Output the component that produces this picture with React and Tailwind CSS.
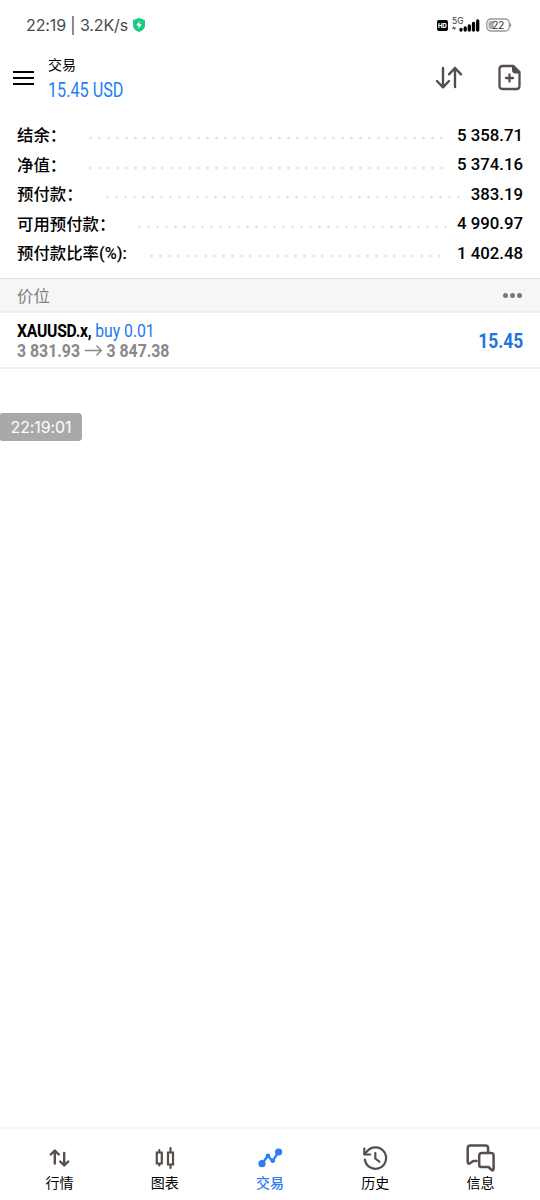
import React from 'react';

const summary = [
  { label: '结余：', value: '5 358.71' },
  { label: '净值：', value: '5 374.16' },
  { label: '预付款：', value: '383.19' },
  { label: '可用预付款：', value: '4 990.97' },
  { label: '预付款比率(%):', value: '1 402.48' },
];

const tabs = [
  { name: '行情', icon: QuotesIcon },
  { name: '图表', icon: ChartIcon },
  { name: '交易', icon: TradeIcon, active: true },
  { name: '历史', icon: HistoryIcon },
  { name: '信息', icon: MessagesIcon },
];

const strokeProps = {
  fill: 'none',
  stroke: 'currentColor',
  strokeWidth: 2.2,
  strokeLinecap: 'round',
  strokeLinejoin: 'round',
};

function QuotesIcon() {
  return (
    <svg width="30" height="30" {...strokeProps} strokeWidth="2.4">
      <path d="M9.800 20.500V8M5.800 11.500l4-4 4 4M19.200 10v12M15.200 18.500l4 4 4-4" />
    </svg>
  );
}

function ChartIcon() {
  return (
    <svg width="30" height="30" {...strokeProps} strokeWidth="2.2">
      <path d="M9.300 7V9.500M9.300 20.500v2M6.800 9.500h5v11h-5zM20.500 5v4M20.500 21.500v3.500M18 9.500h5v12h-5z" strokeLinejoin="miter" />
    </svg>
  );
}

function TradeIcon() {
  return (
    <svg width="30" height="30" {...strokeProps} strokeWidth="2.4">
      <path d="M7 20.700l6-8 4.500 5.500 6-9" />
      <circle cx="7" cy="20.700" r="3.600" fill="currentColor" stroke="none" />
      <circle cx="13" cy="12.700" r="2.300" fill="currentColor" stroke="none" />
      <circle cx="17.800" cy="17.800" r="2.300" fill="currentColor" stroke="none" />
      <circle cx="23.600" cy="9" r="3.600" fill="currentColor" stroke="none" />
    </svg>
  );
}

function HistoryIcon() {
  return (
    <svg width="30" height="30" {...strokeProps}>
      <path d="M4.800 16.500a10.700 10.700 0 1 0 2.300-8.200L4.600 11" />
      <path d="M4.300 5.500v6h6M15.300 10v5.500l4 3.200" />
    </svg>
  );
}

function MessagesIcon() {
  return (
    <svg width="30" height="30" {...strokeProps} strokeWidth="2.5">
      <path d="M11.500 18H8.200L5 20.300Q2.700 21.400 2.700 19V5.300q0-2.700 2.700-2.700h15q2.700 0 2.700 2.700V9" />
      <path d="M17 10h9q2.600 0 2.600 2.600V25.800q0 2.400-2 1.200L23.500 24H16.500q-2.300 0-2.300-2.300v-9q0-2.700 2.700-2.700z" />
    </svg>
  );
}

function StatusBar() {
  return (
    <div className="flex h-[50px] items-center pl-[26px] pr-[28px] text-[#4a4a4a]">
      <span className="w-[107px] whitespace-pre font-['Inter',sans-serif] text-[16px] tracking-[-0.12px]">22:19 | 3.2K/s</span>
      <svg width="12" height="14" viewBox="0 0 12 14">
        <path d="M6 0l6 2v5.500q0 4-6 6.500Q0 11.500 0 7.500V2z" fill="#19cc85" />
        <path d="M6.600 3L3.300 7.600h2.300L5.200 11l3.500-4.800H6.300z" fill="#fff" />
      </svg>
      <div className="ml-auto flex items-center">
        <span className="flex h-[11px] w-[11px] items-center justify-center rounded-[2px] bg-black font-['Inter',sans-serif] text-[6px] font-extrabold text-white">HD</span>
        <svg className="ml-[4px]" width="29" height="18">
          <text x="0" y="7.500" fontFamily="Inter, sans-serif" fontSize="8.500" fill="#333">5G</text>
          <path d="M0 12.500l1.700-2.500v3zM4 11.500l-1.700 3v-3z" fill="#222" />
          <g stroke="#000" strokeWidth="3.300" strokeLinecap="round">
            <path d="M9 14v-.5M13.200 14v-2M17.300 14v-4M21.500 14v-6.500M25.700 14v-9" />
          </g>
        </svg>
        <svg className="ml-[5px]" width="26" height="14">
          <rect x=".8" y="1" width="22.500" height="12" rx="4" fill="none" stroke="#999" strokeWidth="1.300" />
          <path d="M5 3h2.500v8H5q-2.500 0-2.500-2.500v-3Q2.500 3 5 3z" fill="#aaa" />
          <path d="M24.300 5.500q1.500 1.500 0 3z" stroke="#999" fill="#999" />
          <text x="6" y="10.800" fontFamily="Inter, sans-serif" fontSize="10.500" letterSpacing="-.5" fill="#333">22</text>
        </svg>
      </div>
    </div>
  );
}

function Header() {
  return (
    <header className="flex h-[58px] items-center pl-[13px] pr-[17px]">
      <div className="mt-[-2px] flex w-[21px] flex-col gap-[4px]">
        <span className="h-[2px] bg-black" />
        <span className="h-[2px] bg-black" />
        <span className="h-[2px] bg-black" />
      </div>
      <div className="mt-[-4px] ml-[14px] flex flex-col">
        <h1 className="h-[25px] text-[14px] leading-[24px]">交易</h1>
        <span className="origin-left scale-x-[0.81] whitespace-nowrap text-[20px] leading-[24px] text-[#2081f7]">15.45 USD</span>
      </div>
      <svg className="mt-[-2px] ml-auto text-[#564e4b]" width="28" height="28" {...strokeProps} strokeWidth="2.400">
        <path d="M8 4v19M2 17l6 6.300 6-6.300M20 23V4M14 10.300L20 4l6 6.300" />
      </svg>
      <svg className="mt-[-2px] ml-[34px] text-[#564e4b]" width="26" height="28" {...strokeProps} strokeWidth="2.300">
        <path d="M5.500 2H16.500l6 6V22q0 3-3 3h-14q-3 0-3-3V5q0-3 3-3z" />
        <path d="M15.500 2v4.500q0 2.500 2.500 2.500h4.500z" fill="currentColor" strokeWidth="1" />
        <path d="M12.500 10.500v7M9 14h7" />
      </svg>
    </header>
  );
}

function SummaryRow({ label, value }) {
  return (
    <div className="flex h-[29.5px] items-center whitespace-nowrap">
      <span className="mt-[4px] text-[16.4px] font-medium">{label}</span>
      <span className="ml-[20px] mr-[10px] mt-[7px] h-[4px] flex-1 bg-[radial-gradient(circle,#e4e4e4_1px,transparent_1.8px)] bg-[length:9px_4px] bg-repeat-x" />
      <span className="mt-[1px] text-[16.8px] font-medium">{value}</span>
    </div>
  );
}

function Position() {
  return (
    <div className="flex h-[56px] items-center justify-between border-b-2 border-[#eeeeee] pl-[17px] pr-[17px]">
      <div className="mt-[2px] flex flex-col">
        <div className="origin-left scale-x-[0.85] whitespace-nowrap text-[18.5px] leading-[20px]">
          <span className="font-bold tracking-[-0.3px]">XAUUSD.x,</span>{' '}
          <span className="text-[#2077f0]">buy 0.01</span>
        </div>
        <div className="flex origin-left scale-x-[0.855] items-center whitespace-nowrap text-[18.5px] font-bold leading-[20px] text-[#888]">
          3 831.93
          <svg className="mx-[5px]" width="21" height="14" fill="none" stroke="currentColor" strokeWidth="1.600">
            <path d="M0 6.500h19.500M14 1.500l5.500 5-5.500 5" />
          </svg>
          3 847.38
        </div>
      </div>
      <span className="mt-[3px] origin-right scale-x-[0.83] text-[21px] font-bold text-[#1f74e0]">15.45</span>
    </div>
  );
}

function TabBar() {
  return (
    <nav className="flex h-[73px] border-t-2 border-[#f7f7f7] px-[7px] pt-[14px]">
      {tabs.map((tab) => (
        <button key={tab.name} className="flex flex-1 flex-col items-center">
          <span className={tab.active ? 'text-[#2f7df6]' : 'text-[#564e4b]'}>
            <tab.icon />
          </span>
          <span className={`text-[14px] leading-[20px] ${tab.active ? 'font-medium text-[#2f7df6]' : 'text-black'}`}>
            {tab.name}
          </span>
        </button>
      ))}
    </nav>
  );
}

const App = () => {
  return (
    <div className="flex h-[1200px] w-[540px] flex-col bg-white font-['Roboto','Noto_Sans_CJK_SC',sans-serif] text-black">
      <StatusBar />
      <Header />
      <main className="flex-1">
        <section className="h-[170px] px-[17px] pt-[12px]">
          {summary.map((row) => (
            <SummaryRow key={row.label} {...row} />
          ))}
        </section>
        <div className="flex h-[35px] items-center justify-between border-b-2 border-t border-b-[#eeeeee] border-t-[#e0e0e0] bg-[#f6f6f6] pl-[17px] pr-[18px] text-[#808080]">
          <span className="mt-[4px] text-[16.4px]">价位</span>
          <span className="mt-[1px] flex gap-[2px]">
            <i className="h-[5px] w-[5px] rounded-full bg-[#777]" />
            <i className="h-[5px] w-[5px] rounded-full bg-[#777]" />
            <i className="h-[5px] w-[5px] rounded-full bg-[#777]" />
          </span>
        </div>
        <Position />
        <div className="mt-[44px] flex h-[28px] w-[82px] items-center justify-center rounded-r-[4px] rounded-l-[2px] bg-[#a9a9a9] font-['Inter',sans-serif] text-[16px] tracking-[-0.1px] text-white">
          22:19:01
        </div>
      </main>
      <TabBar />
    </div>
  );
};

export default App;
